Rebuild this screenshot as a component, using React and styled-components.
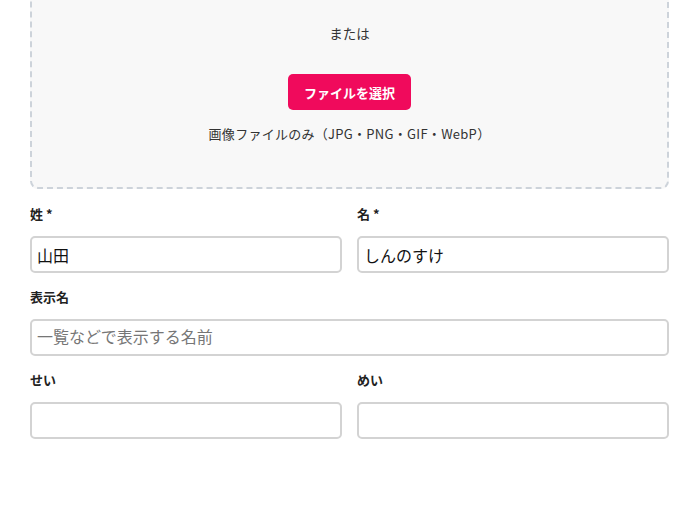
import React from 'react'
import styled, { createGlobalStyle } from 'styled-components'

const GlobalStyle = createGlobalStyle`
  html, body {
    margin: 0;
    padding: 0;
    background: #fff;
    overflow: hidden;
  }
  body {
    font-family: "Noto Sans CJK JP", "Noto Sans", sans-serif;
    color: #333;
  }
`;

const Page = styled.div`
  width: 639px;
  padding: 0 30px;
`;

const DropZone = styled.div`
  margin-top: -120px;
  padding: 141px 20px 43px;
  background: #f8f8f8;
  border: 2px dashed #cdd3da;
  border-radius: 8px;
  display: flex;
  flex-direction: column;
  align-items: center;
`;

const Or = styled.p`
  margin: 0;
  font-size: 13.5px;
  line-height: 20px;
  color: #333;
`;

const SelectButton = styled.button`
  margin-top: 31px;
  height: 36px;
  padding: 0 16px;
  border: none;
  border-radius: 5px;
  background: #f00a5c;
  color: #fff;
  font-family: "Noto Sans CJK JP", "Noto Sans", sans-serif;
  font-size: 13px;
  font-weight: bold;
  cursor: pointer;
`;

const Note = styled.p`
  margin: 14px 0 0;
  font-size: 13px;
  line-height: 20px;
  letter-spacing: 0.28px;
  color: #333;
`;

const Fields = styled.div`
  margin-top: 15px;
  display: grid;
  grid-template-columns: 1fr 1fr;
  column-gap: 15px;
  row-gap: 14px;
`;

const Field = styled.div`
  display: flex;
  flex-direction: column;
  grid-column: ${p => (p.$wide ? '1 / -1' : 'auto')};
`;

const Label = styled.label`
  font-size: 13px;
  line-height: 20px;
  font-weight: bold;
  color: #222;
  margin-bottom: 12px;
`;

const Input = styled.input`
  box-sizing: border-box;
  width: 100%;
  height: 37px;
  padding: 0 5px;
  border: 2px solid #d3d3d3;
  border-radius: 5px;
  background: #fff;
  font-family: "Liberation Sans", "Noto Sans CJK JP", sans-serif;
  font-size: 16px;
  color: #111;
  outline: none;

  &::placeholder {
    color: #767676;
  }
`;

export default function App() {
  return (
    <Page>
      <GlobalStyle />
      <DropZone>
        <Or>または</Or>
        <SelectButton type="button">ファイルを選択</SelectButton>
        <Note>画像ファイルのみ（JPG・PNG・GIF・WebP）</Note>
      </DropZone>
      <Fields>
        <Field>
          <Label>姓 *</Label>
          <Input defaultValue="山田" />
        </Field>
        <Field>
          <Label>名 *</Label>
          <Input defaultValue="しんのすけ" />
        </Field>
        <Field $wide>
          <Label>表示名</Label>
          <Input placeholder="一覧などで表示する名前" />
        </Field>
        <Field>
          <Label>せい</Label>
          <Input />
        </Field>
        <Field>
          <Label>めい</Label>
          <Input />
        </Field>
      </Fields>
    </Page>
  )
}
